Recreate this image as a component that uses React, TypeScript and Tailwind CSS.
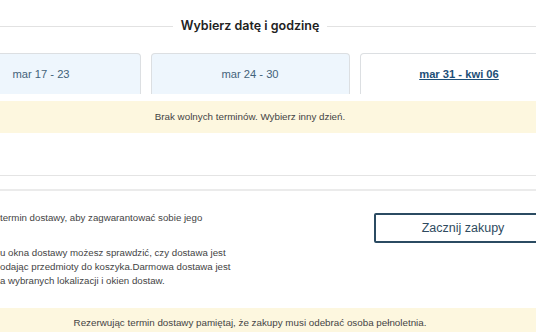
const TABS = [
  { label: "mar 17 - 23", active: false },
  { label: "mar 24 - 30", active: false },
  { label: "mar 31 - kwi 06", active: true },
];

export default function App() {
  return (
    <div className="w-[536px] h-[332px] overflow-hidden bg-white" style={{ fontFamily: "'Liberation Sans', Arial, sans-serif" }}>
      <div className="w-[700px] -ml-[100px]">
        {/* Title */}
        <div className="flex items-center gap-[8px] h-[53px]">
          <div className="flex-1 h-px bg-[#e2e2e2]" />
          <h2 className="text-[12.5px] font-semibold text-[#222] font-['Inter',sans-serif] leading-none">
            Wybierz datę i godzinę
          </h2>
          <div className="flex-1 h-px bg-[#e2e2e2]" />
        </div>

        {/* Week tabs */}
        <div className="flex justify-center gap-[10px] h-[41px]">
          {TABS.map((tab) => (
            <div
              key={tab.label}
              className={
                tab.active
                  ? "w-[199px] flex items-center justify-center rounded-t-[4px] border border-b-0 border-[#dcdfe2] bg-white text-[11.2px] font-bold text-[#1d4f78] underline"
                  : "w-[199px] flex items-center justify-center rounded-t-[4px] border border-b-0 border-[#dcdfe2] bg-[#eef6fd] text-[11.2px] text-[#43627a]"
              }
            >
              {tab.label}
            </div>
          ))}
        </div>

        {/* No slots banner */}
        <div className="mt-[7px] h-[32px] flex items-center justify-center bg-[#fdf7df] text-[9.8px] text-[#444]">
          Brak wolnych terminów. Wybierz inny dzień.
        </div>

        <div className="h-[43px] border-b border-[#e4e4e4]" />
        <div className="h-[15px] border-b-2 border-[#ebebeb]" />

        {/* Info + CTA */}
        <div className="grid grid-cols-[374px_178px] pl-[100px] pt-[20px]">
          <div className="text-[9.7px] leading-[14px] text-[#444] whitespace-nowrap">
            <p>
              termin dostawy, aby zagwarantować sobie jego
              <br />
              &nbsp;
            </p>
            <p className="mt-[7px]">
              u okna dostawy możesz sprawdzić, czy dostawa jest
              <br />
              odając przedmioty do koszyka.Darmowa dostawa jest
              <br />
              a wybranych lokalizacji i okien dostaw.
            </p>
          </div>
          <div>
            <button className="mt-[2px] w-[178px] h-[30px] rounded-[2px] border-2 border-[#2b4b62] bg-white text-[12.5px] text-[#2f4b60]">
              Zacznij zakupy
            </button>
          </div>
        </div>

        {/* Age notice */}
        <div className="mt-[20px] h-[30px] flex items-center justify-center bg-[#fdf7df] text-[9.8px] text-[#444]">
          Rezerwując termin dostawy pamiętaj, że zakupy musi odebrać osoba pełnoletnia.
        </div>
      </div>
    </div>
  );
}
